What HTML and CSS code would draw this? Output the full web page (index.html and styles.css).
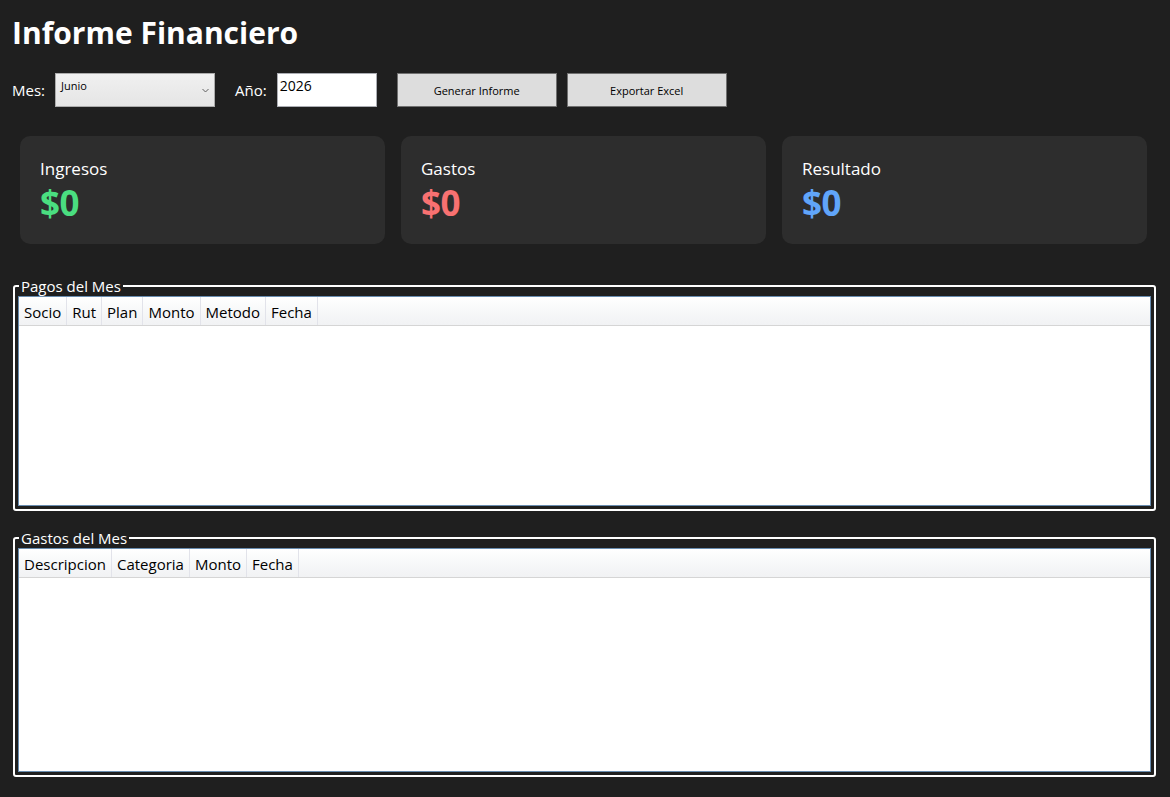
FILE: index.html
```html
<!DOCTYPE html>
<html lang="es">
<head>
    <meta charset="UTF-8">
    <title>Informe Financiero</title>
    <link rel="stylesheet" href="styles.css">
</head>
<body>
    <h1 class="title">Informe Financiero</h1>

    <div class="toolbar">
        <span class="lbl">Mes:</span>
        <div class="combo">
            <span>Junio</span>
            <svg class="chev" width="7" height="5" viewBox="0 0 7 5"><path d="M0.5 1 L3.5 4 L6.5 1" fill="none" stroke="#606060" stroke-width="1"/></svg>
        </div>
        <span class="lbl lbl-year">Año:</span>
        <div class="textbox">2026</div>
        <button class="btn">Generar Informe</button>
        <button class="btn">Exportar Excel</button>
    </div>

    <div class="cards">
        <div class="card">
            <div class="card-label">Ingresos</div>
            <div class="card-value green">$0</div>
        </div>
        <div class="card">
            <div class="card-label">Gastos</div>
            <div class="card-value red">$0</div>
        </div>
        <div class="card">
            <div class="card-label">Resultado</div>
            <div class="card-value blue">$0</div>
        </div>
    </div>

    <fieldset class="group group-pagos">
        <legend>Pagos del Mes</legend>
        <div class="grid">
            <div class="grid-head">
                <div class="col">Socio</div>
                <div class="col">Rut</div>
                <div class="col">Plan</div>
                <div class="col">Monto</div>
                <div class="col">Metodo</div>
                <div class="col">Fecha</div>
            </div>
        </div>
    </fieldset>

    <fieldset class="group group-gastos">
        <legend>Gastos del Mes</legend>
        <div class="grid">
            <div class="grid-head">
                <div class="col">Descripcion</div>
                <div class="col">Categoria</div>
                <div class="col">Monto</div>
                <div class="col">Fecha</div>
            </div>
        </div>
    </fieldset>
</body>
</html>
```

FILE: styles.css
```css
body {
    margin: 0;
    padding: 0 14px 0 12px;
    background: #1f1f1f;
    color: #ffffff;
    font-family: "Open Sans", "Noto Sans", sans-serif;
    overflow: hidden;
}
.title {
    margin: 0;
    padding-top: 12px;
    height: 60px;
    box-sizing: border-box;
    font-size: 30px;
    line-height: 42px;
    font-weight: 700;
}
.toolbar {
    display: flex;
    align-items: center;
    height: 34px;
    margin-top: 13px;
}
.lbl {
    font-size: 15px;
    margin-right: 10px;
}
.lbl-year {
    margin-left: 20px;
    margin-right: 10px;
}
.combo {
    position: relative;
    width: 160px;
    height: 34px;
    box-sizing: border-box;
    border: 1px solid #acacac;
    background: linear-gradient(#f0f0f0, #e5e5e5);
    color: #000;
    font-size: 11px;
    padding: 4px 0 0 5px;
}
.chev {
    position: absolute;
    right: 5px;
    top: 14px;
}
.textbox {
    width: 100px;
    height: 34px;
    box-sizing: border-box;
    border: 1px solid #abadb3;
    background: #fff;
    color: #000;
    font-size: 14px;
    padding: 2px 0 0 2px;
}
.btn {
    width: 160px;
    height: 34px;
    margin-left: 20px;
    background: #dddddd;
    border: 1px solid #707070;
    color: #000;
    font-family: "Open Sans", "Noto Sans", sans-serif;
    font-size: 11px;
    padding: 0;
}
.btn + .btn {
    margin-left: 10px;
}
.cards {
    display: flex;
    gap: 16px;
    margin: 29px 9px 0 8px;
}
.card {
    flex: 1;
    height: 108px;
    box-sizing: border-box;
    background: #2d2d2d;
    border-radius: 10px;
    padding: 21px 20px;
}
.card-label {
    font-size: 17px;
    line-height: 24px;
}
.card-value {
    font-size: 35px;
    font-weight: 700;
    line-height: 44px;
    letter-spacing: -0.5px;
}
.green { color: #4ade80; }
.red { color: #f87171; }
.blue { color: #60a5fa; }
.group {
    margin: 0 0 0 1px;
    border: 2px solid #ffffff;
    border-radius: 3px;
    padding: 2px 3px 3px 3px;
    min-width: 0;
}
.group-pagos {
    margin-top: 34px;
    height: 233px;
    box-sizing: border-box;
}
.group-gastos {
    margin-top: 19px;
    height: 247px;
    box-sizing: border-box;
}
.group legend {
    font-size: 15px;
    line-height: 16px;
    padding: 0 2px;
    margin-left: 1px;
}
.grid {
    height: 100%;
    box-sizing: border-box;
    background: #fff;
    border: 1px solid #688caf;
}
.grid-head {
    display: flex;
    height: 29px;
    box-sizing: border-box;
    background: linear-gradient(#ffffff, #f7f8f9 50%, #f1f2f4);
    border-bottom: 1px solid #d5d5d5;
}
.col {
    color: #000;
    font-size: 15px;
    line-height: 30px;
    padding: 0 5px 0 5px;
    border-right: 1px solid #e2e3ea;
}
```
